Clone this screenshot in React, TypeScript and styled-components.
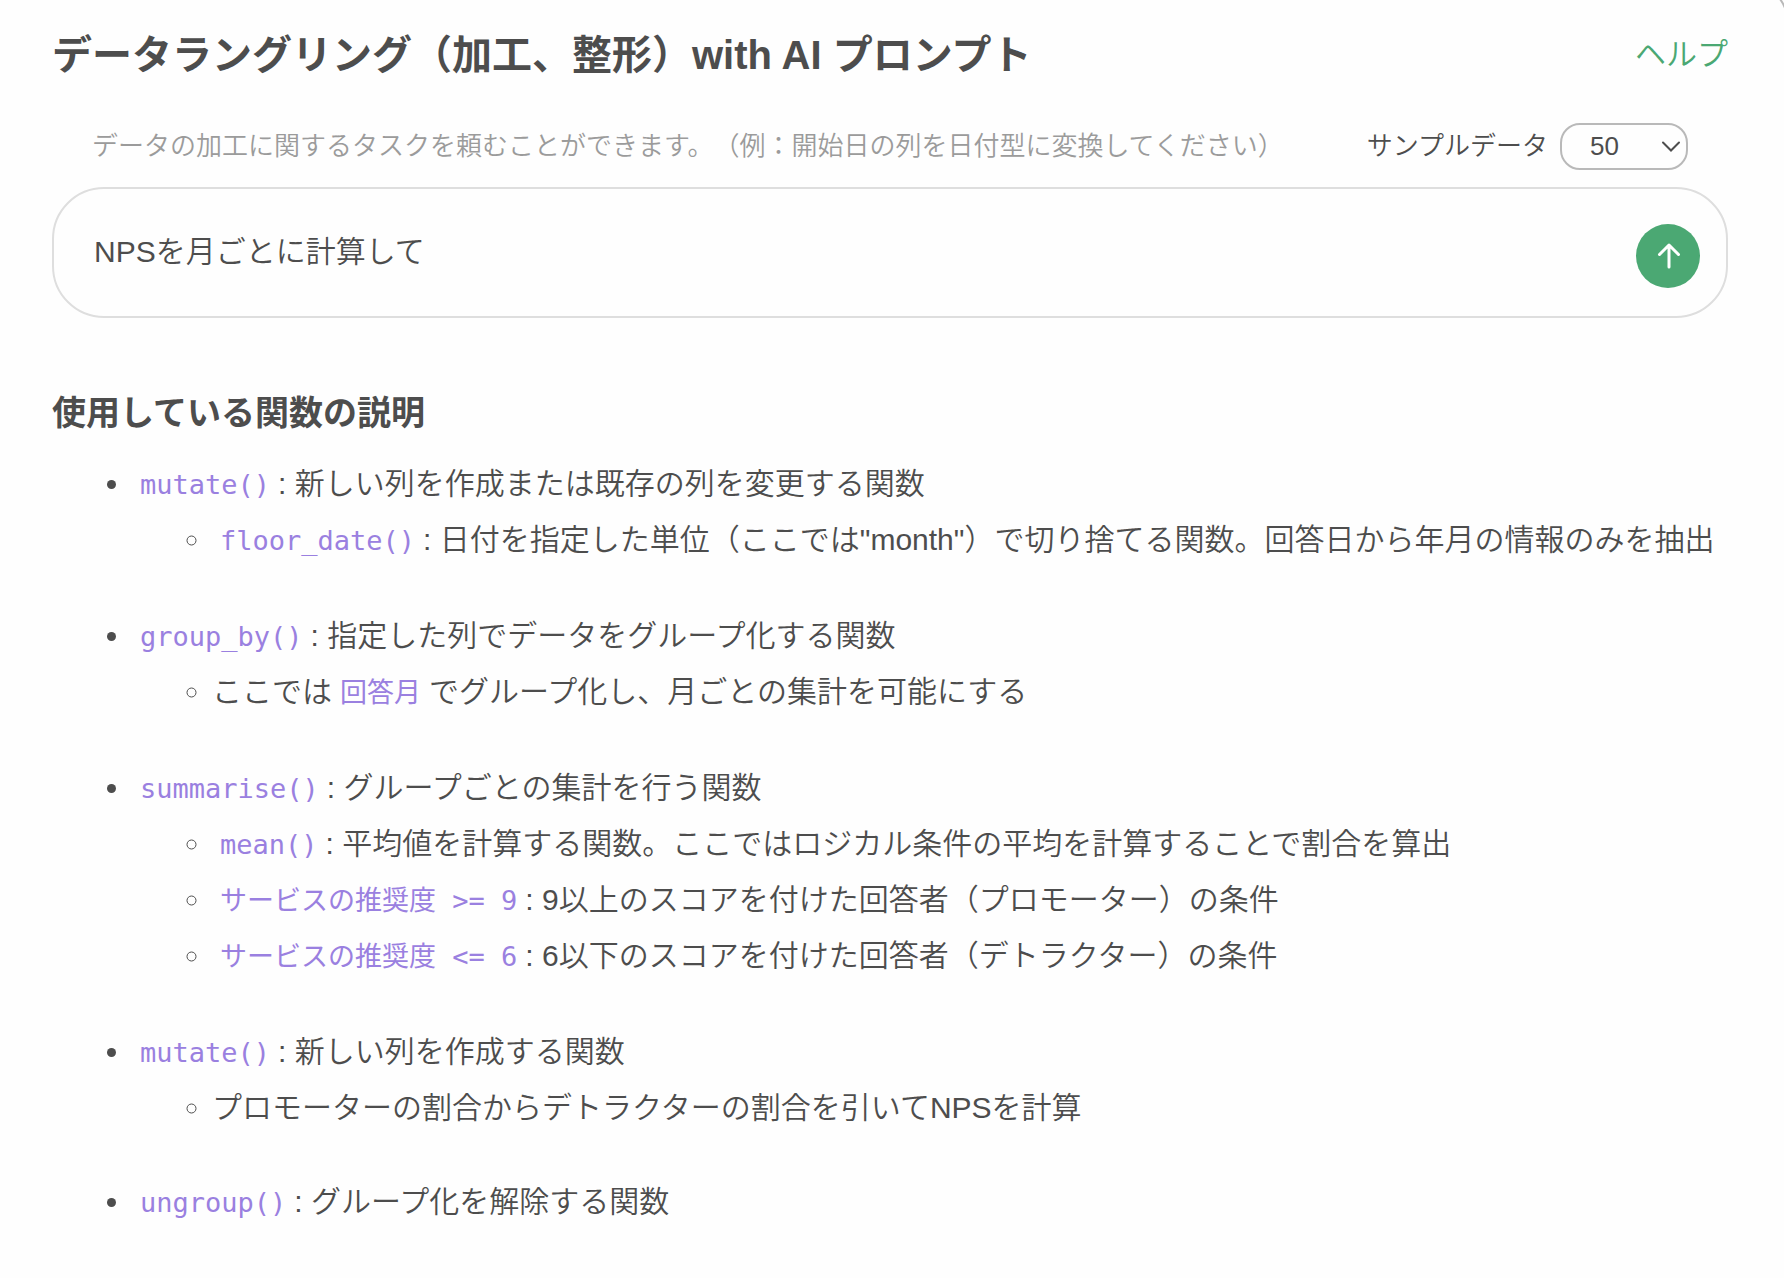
import React, { useState } from "react";
import styled, { createGlobalStyle } from "styled-components";

const GlobalStyle = createGlobalStyle`
  *, *::before, *::after { box-sizing: border-box; }
  body {
    margin: 0;
    background: #fefefe;
    color: #4d4d4d;
    font-family: "Liberation Sans", "Noto Sans CJK JP", sans-serif;
    font-size: 30px;
    font-weight: 350;
    text-spacing-trim: space-all;
  }
`;

const Panel = styled.main`
  position: relative;
  min-height: 100vh;
  padding: 27px 56px 48px 52px;
  overflow: hidden;
`;

const Corner = styled.svg`
  position: absolute;
  top: 0;
  right: 0;
`;

const Header = styled.header`
  display: flex;
  align-items: center;
  justify-content: space-between;
`;

const Title = styled.h1`
  margin: 0;
  font-size: 40px;
  line-height: 56px;
  font-weight: 700;
`;

const HelpLink = styled.a`
  color: #4ba873;
  font-size: 31px;
  line-height: 56px;
  text-decoration: none;
`;

const HintRow = styled.div`
  display: flex;
  align-items: center;
  justify-content: space-between;
  margin-top: 40px;
  padding: 0 40px;
  font-size: 26px;
  line-height: 47px;
`;

const Hint = styled.label`
  color: #9b9b9b;
`;

const SampleField = styled.div`
  display: flex;
  align-items: center;
  gap: 12px;
`;

const SelectWrap = styled.div`
  position: relative;
  display: flex;
`;

const SampleSelect = styled.select`
  appearance: none;
  width: 128px;
  height: 47px;
  padding: 0 28px;
  border: 2px solid #b9b9b9;
  border-radius: 20px;
  background: transparent;
  color: inherit;
  font: inherit;
  line-height: 43px;
`;

const Chevron = styled.svg`
  position: absolute;
  top: 17px;
  right: 7px;
  pointer-events: none;
`;

const PromptBox = styled.form`
  display: flex;
  align-items: flex-start;
  margin-top: 17px;
  padding: 35px 26px 28px 40px;
  border: 2px solid #dedede;
  border-radius: 52px;
`;

const PromptInput = styled.input`
  flex: 1;
  min-width: 0;
  height: 64px;
  padding: 0 0 14px;
  border: 0;
  outline: 0;
  background: transparent;
  color: inherit;
  font: inherit;
`;

const SendButton = styled.button`
  display: flex;
  align-items: center;
  justify-content: center;
  width: 64px;
  height: 64px;
  padding: 0;
  border: 0;
  border-radius: 50%;
  background: #4ba873;
  color: #fff;
`;

const SectionTitle = styled.h2`
  margin: 71px 0 20px;
  font-size: 34px;
  line-height: 48px;
  font-weight: 700;
`;

const FunctionList = styled.ul`
  margin: 0;
  padding-left: 80px;
  list-style: disc;
  line-height: 54px;
`;

const FunctionItem = styled.li`
  & + & { margin-top: 40px; }
`;

const DetailList = styled.ul`
  margin: 0;
  padding-left: 80px;
  list-style: circle;
`;

const Code = styled.code`
  padding: 0 8px;
  color: #9a80e0;
  font-family: "DejaVu Sans Mono", "Noto Sans CJK JP", monospace;
  font-size: 27px;
  font-weight: 400;
  line-height: 56px;
`;

type Line = { before?: string; code?: string; text: string };
type Entry = Line & { details: Line[] };

const entries: Entry[] = [
  {
    code: "mutate()",
    text: ": 新しい列を作成または既存の列を変更する関数",
    details: [
      {
        code: "floor_date()",
        text: ': 日付を指定した単位（ここでは"month"）で切り捨てる関数。回答日から年月の情報のみを抽出',
      },
    ],
  },
  {
    code: "group_by()",
    text: ": 指定した列でデータをグループ化する関数",
    details: [
      { before: "ここでは", code: "回答月", text: "でグループ化し、月ごとの集計を可能にする" },
    ],
  },
  {
    code: "summarise()",
    text: ": グループごとの集計を行う関数",
    details: [
      {
        code: "mean()",
        text: ": 平均値を計算する関数。ここではロジカル条件の平均を計算することで割合を算出",
      },
      {
        code: "サービスの推奨度 >= 9",
        text: ": 9以上のスコアを付けた回答者（プロモーター）の条件",
      },
      {
        code: "サービスの推奨度 <= 6",
        text: ": 6以下のスコアを付けた回答者（デトラクター）の条件",
      },
    ],
  },
  {
    code: "mutate()",
    text: ": 新しい列を作成する関数",
    details: [{ text: "プロモーターの割合からデトラクターの割合を引いてNPSを計算" }],
  },
  { code: "ungroup()", text: ": グループ化を解除する関数", details: [] },
];

function LineContent({ before, code, text }: Line) {
  return (
    <>
      {before}
      {code && <Code>{code}</Code>}
      {text}
    </>
  );
}

export default function App() {
  const [prompt, setPrompt] = useState("NPSを月ごとに計算して");
  const [sample, setSample] = useState("50");

  return (
    <>
      <GlobalStyle />
      <Panel lang="ja">
        <Corner width="8" height="10" viewBox="0 0 8 10" fill="none" aria-hidden="true">
          <path d="M4 -1Q7 3 9 8" stroke="#b9b9b9" strokeWidth="2" />
        </Corner>
        <Header>
          <Title>データラングリング（加工、整形）with AI プロンプト</Title>
          <HelpLink href="#help">ヘルプ</HelpLink>
        </Header>
        <HintRow>
          <Hint htmlFor="prompt">
            データの加工に関するタスクを頼むことができます。（例：開始日の列を日付型に変換してください）
          </Hint>
          <SampleField>
            <label htmlFor="sample">サンプルデータ</label>
            <SelectWrap>
              <SampleSelect
                id="sample"
                value={sample}
                onChange={(event) => setSample(event.target.value)}
              >
                <option>10</option>
                <option>50</option>
                <option>100</option>
              </SampleSelect>
              <Chevron width="20" height="14" viewBox="0 0 20 14" fill="none" aria-hidden="true">
                <path d="M2 2.5L10 10.5L18 2.5" stroke="#4d4d4d" strokeWidth="2" strokeLinecap="round" />
              </Chevron>
            </SelectWrap>
          </SampleField>
        </HintRow>
        <PromptBox onSubmit={(event) => event.preventDefault()}>
          <PromptInput
            id="prompt"
            value={prompt}
            onChange={(event) => setPrompt(event.target.value)}
          />
          <SendButton type="submit" aria-label="送信">
            <svg width="28" height="28" viewBox="0 0 28 28" fill="none" aria-hidden="true">
              <path
                d="M15 25V3M5.500 12.500L15 3L24.500 12.500"
                stroke="currentColor"
                strokeWidth="3"
                strokeLinecap="round"
                strokeLinejoin="round"
              />
            </svg>
          </SendButton>
        </PromptBox>
        <SectionTitle>使用している関数の説明</SectionTitle>
        <FunctionList>
          {entries.map((entry, index) => (
            <FunctionItem key={index}>
              <LineContent {...entry} />
              {entry.details.length > 0 && (
                <DetailList>
                  {entry.details.map((detail) => (
                    <li key={detail.text}>
                      <LineContent {...detail} />
                    </li>
                  ))}
                </DetailList>
              )}
            </FunctionItem>
          ))}
        </FunctionList>
      </Panel>
    </>
  );
}
